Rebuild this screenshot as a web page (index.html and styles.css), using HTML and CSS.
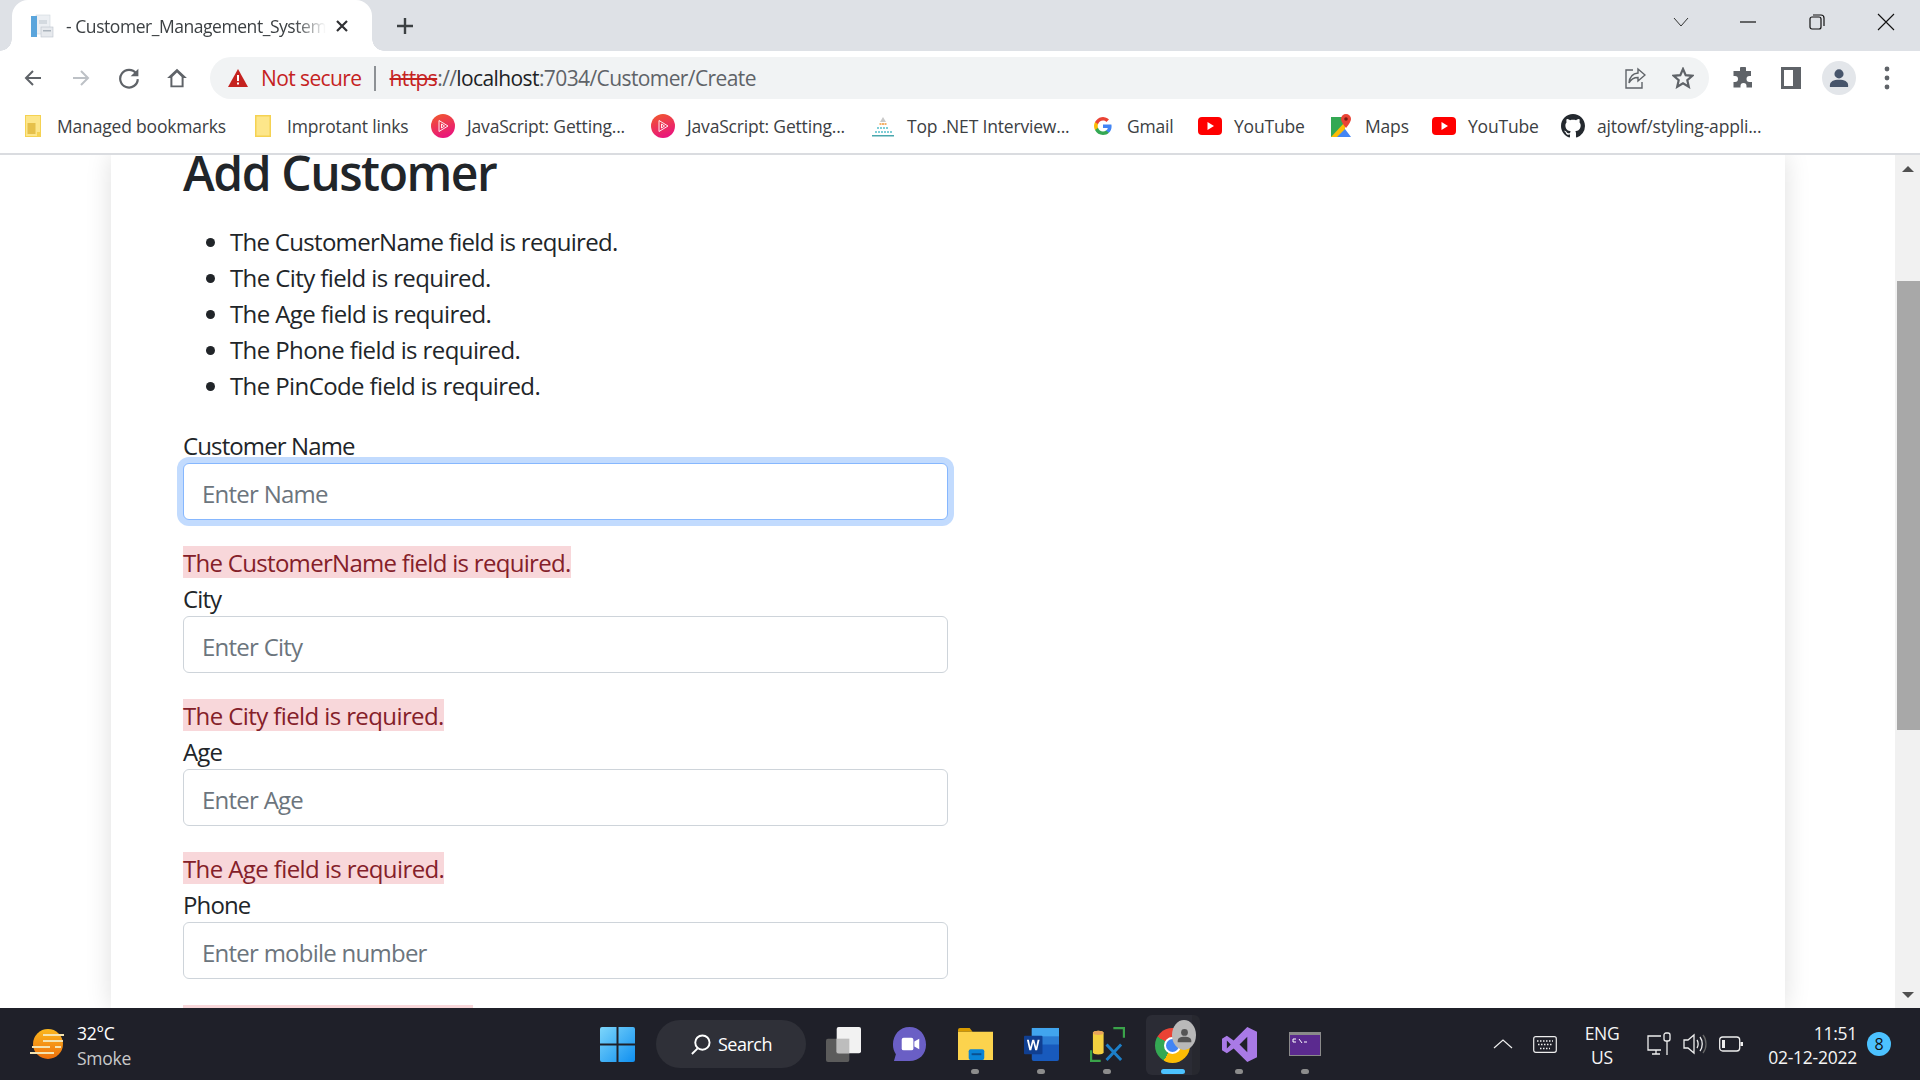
FILE: index.html
```html
<!DOCTYPE html>
<html lang="en">
<head>
<meta charset="utf-8">
<title>Customer_Management_System</title>
<link rel="stylesheet" href="styles.css">
</head>
<body>
<div class="screen">
  <header class="tabstrip">
    <div class="tab">
      <svg class="favicon" viewBox="0 0 24 24"><rect x="6" y="1" width="14" height="19" fill="#eceff3" stroke="#cfd6dd" stroke-width=".6"/><rect x="1" y="2" width="6" height="21" fill="#5aa5dc"/><rect x="9" y="6" width="8" height="4" fill="#d4dae0"/><rect x="11" y="13" width="12" height="10" fill="#e6e9ed" stroke="#bcc4cc" stroke-width=".6"/><rect x="13" y="16" width="8" height="1.5" fill="#aab3bc"/></svg>
      <span class="tab-title">- Customer_Management_System</span>
      <svg class="tab-close" viewBox="0 0 14 14"><path d="M2 2l10 10M12 2L2 12" stroke="#303134" stroke-width="2.2" fill="none"/></svg>
    </div>
    <svg class="new-tab" viewBox="0 0 18 18"><path d="M9 1v16M1 9h16" stroke="#3c4043" stroke-width="2.4" fill="none"/></svg>
    <div class="window-controls">
      <svg class="wc" viewBox="0 0 18 18"><path d="M2 5l7 8 7-8" stroke="#333" stroke-width="1" fill="none"/></svg>
      <svg class="wc" viewBox="0 0 18 18"><path d="M1 9h16" stroke="#111" stroke-width="1.2" fill="none"/></svg>
      <svg class="wc" viewBox="0 0 18 18"><rect x="2" y="4" width="11" height="12" rx="2" stroke="#111" stroke-width="1.2" fill="none"/><path d="M5 2h8a3 3 0 0 1 3 3v8" stroke="#111" stroke-width="1.2" fill="none"/></svg>
      <svg class="wc" viewBox="0 0 18 18"><path d="M1 1l16 16M17 1L1 17" stroke="#111" stroke-width="1.1" fill="none"/></svg>
    </div>
  </header>

  <nav class="toolbar">
    <div class="nav-group">
      <div class="slot"><svg class="ic20" viewBox="0 0 20 20"><path d="M18 10H3M10 3l-7 7 7 7" stroke="#5f6368" stroke-width="2" fill="none"/></svg></div>
      <div class="slot"><svg class="ic20" viewBox="0 0 20 20"><path d="M2 10h15M10 3l7 7-7 7" stroke="#bdc1c6" stroke-width="2" fill="none"/></svg></div>
      <div class="slot"><svg class="ic22" viewBox="0 0 20 20"><path d="M16.5 6A8 8 0 1 0 18 11" stroke="#5f6368" stroke-width="2" fill="none"/><path d="M18.5 1.5v7h-7z" fill="#5f6368"/></svg></div>
      <div class="slot"><svg class="ic22" viewBox="0 0 20 20"><path d="M10 1.500L1 10h3v8.500h12V10h3zM5.800 16.800V9l4.200-4 4.200 4v7.800z" fill="#5f6368" fill-rule="evenodd"/></svg></div>
    </div>
    <div class="omnibox">
      <svg class="warn" viewBox="0 0 20 18"><path d="M10 0l10 18H0z" fill="#c5221f"/><rect x="9" y="6" width="2" height="6" fill="#fff"/><rect x="9" y="13.500" width="2" height="2" fill="#fff"/></svg>
      <span class="not-secure">Not secure</span>
      <span class="sep"></span>
      <span class="url"><span class="https">https</span>://<span class="host">localhost</span>:7034/Customer/Create</span>
      <div class="omni-actions">
        <div class="slot"><svg class="ic22" viewBox="0 0 22 22"><path d="M9 3H2v18h16v-6" stroke="#5f6368" stroke-width="1.400" fill="none"/><path d="M14 2l7 6-7 6v-3.500C10 10.500 7 12 5 16c.5-5.500 3.500-9.500 9-10z" stroke="#5f6368" stroke-width="1.400" fill="none"/></svg></div>
        <div class="slot"><svg class="ic22" viewBox="0 0 22 22"><path d="M11 2l2.700 6.200 6.700.6-5.100 4.400 1.500 6.600L11 16.300 5.200 19.800l1.500-6.600L1.600 8.800l6.700-.6z" stroke="#5f6368" stroke-width="2.200" fill="none"/></svg></div>
      </div>
    </div>
    <div class="tool-group">
      <div class="slot"><svg class="ic22" viewBox="0 0 22 22"><path d="M8 1.500a3 3 0 0 1 6 .5v2h5v5h-1.500a3 3 0 0 0 0 6H20v5.500h-5.500V19a3 3 0 0 0-6 0v1.500H1.500V15H3a3 3 0 0 0 0-6H1.500V4H8z" fill="#5f6368"/></svg></div>
      <div class="slot"><svg class="ic22" viewBox="0 0 22 22"><path d="M1 0h20v22H1zM4 3v16h9V3z" fill="#5f6368" fill-rule="evenodd"/></svg></div>
      <div class="slot"><div class="avatar"><svg class="ic22" viewBox="0 0 22 22"><circle cx="11" cy="6.500" r="5" fill="#47556b"/><path d="M1 21v-2c0-4 4-6 10-6s10 2 10 6v2z" fill="#47556b"/></svg></div></div>
      <div class="slot"><svg class="dots" viewBox="0 0 6 24"><circle cx="3" cy="3" r="2.400" fill="#5f6368"/><circle cx="3" cy="12" r="2.400" fill="#5f6368"/><circle cx="3" cy="21" r="2.400" fill="#5f6368"/></svg></div>
    </div>
  </nav>

  <div class="bookmarks">
    <a class="bm b1"><svg class="folder" viewBox="0 0 18 22"><path d="M1 0h16v22H1z" fill="#f5d252"/><path d="M2 1h14v20H2z" fill="#fde68a"/><rect x="3.500" y="8" width="8" height="11" fill="#e6c04a"/><rect x="13" y="17" width="4" height="5" fill="#f5d252"/></svg><span>Managed bookmarks</span></a>
    <a class="bm b2"><svg class="folder" viewBox="0 0 18 22"><path d="M1 0h16v22H1z" fill="#f5d252"/><path d="M2.500 1.500h13v19h-13z" fill="#fde68a"/></svg><span>Improtant links</span></a>
    <a class="bm b3"><span class="ps"><svg class="ps-i" viewBox="0 0 14 14"><path d="M3 1.500L12 7l-9 5.500zM5.500 5v4l3-2z" stroke="#fff" stroke-width=".9" fill="none"/></svg></span><span>JavaScript: Getting...</span></a>
    <a class="bm b4"><span class="ps"><svg class="ps-i" viewBox="0 0 14 14"><path d="M3 1.500L12 7l-9 5.500zM5.500 5v4l3-2z" stroke="#fff" stroke-width=".9" fill="none"/></svg></span><span>JavaScript: Getting...</span></a>
    <a class="bm b5"><svg class="fav" viewBox="0 0 24 24"><path d="M12 3l3 5h-6z" fill="#c9c9c9"/><path d="M8.500 9h2v2h-2zM11 9h2v2h-2zM13.500 9h2v2h-2z" fill="#f4b26b"/><path d="M6 13h2v2H6zM9 13h2v2H9zM12 13h2v2h-2zM15 13h2v2h-2zM4 17h2v2H4zM7 17h2v2H7zM10 17h2v2h-2zM13 17h2v2h-2zM16 17h2v2h-2zM19 17h2v2h-2z" fill="#7fced6"/><path d="M1 21h22v1.500H1z" fill="#4aa7ad"/></svg><span>Top .NET Interview...</span></a>
    <a class="bm b6"><svg class="g" viewBox="0 0 18 18"><path d="M17.600 9.200c0-.6-.1-1.200-.2-1.800H9v3.500h4.800a4.100 4.100 0 0 1-1.800 2.700v2.200h2.900c1.700-1.600 2.700-3.900 2.700-6.600z" fill="#4285f4"/><path d="M9 18c2.400 0 4.500-.8 5.900-2.200L12 13.600c-.8.500-1.800.9-3 .9-2.300 0-4.300-1.600-5-3.700H1v2.300A9 9 0 0 0 9 18z" fill="#34a853"/><path d="M4 10.700a5.400 5.400 0 0 1 0-3.400V5H1a9 9 0 0 0 0 8z" fill="#fbbc05"/><path d="M9 3.600c1.300 0 2.500.5 3.400 1.300L15 2.400A9 9 0 0 0 1 5l3 2.300c.7-2.100 2.700-3.700 5-3.700z" fill="#ea4335"/></svg><span>Gmail</span></a>
    <a class="bm b7"><svg class="yt" viewBox="0 0 24 18"><rect width="24" height="18" rx="4" fill="#f00"/><path d="M9.500 5l6.500 4-6.500 4z" fill="#fff"/></svg><span>YouTube</span></a>
    <a class="bm b8"><svg class="fav" viewBox="0 0 24 24"><path d="M2 3h14v20H2z" fill="#34a853"/><path d="M2 23L16 8v15z" fill="#fbbc05"/><path d="M8 23l8-8 6 8z" fill="#4285f4"/><path d="M17 0a5 5 0 0 1 5 5c0 3-5 9-5 9s-5-6-5-9a5 5 0 0 1 5-5z" fill="#ea4335"/><circle cx="17" cy="5" r="1.800" fill="#7a1a12"/></svg><span>Maps</span></a>
    <a class="bm b9"><svg class="yt" viewBox="0 0 24 18"><rect width="24" height="18" rx="4" fill="#f00"/><path d="M9.500 5l6.500 4-6.500 4z" fill="#fff"/></svg><span>YouTube</span></a>
    <a class="bm b10"><svg class="fav" viewBox="0 0 16 16"><path fill="#24292f" d="M8 0C3.580 0 0 3.580 0 8c0 3.540 2.290 6.530 5.470 7.590.4.070.55-.17.550-.38 0-.19-.010-.82-.010-1.490-2.010.37-2.530-.49-2.690-.94-.090-.23-.48-.94-.82-1.130-.28-.15-.68-.52-.010-.53.630-.010 1.080.58 1.230.82.720 1.210 1.870.870 2.330.660.070-.52.280-.87.510-1.070-1.780-.2-3.640-.89-3.640-3.950 0-.87.310-1.590.820-2.150-.080-.2-.36-1.020.080-2.120 0 0 .67-.21 2.200.820.640-.18 1.320-.27 2-.27s1.360.090 2 .270c1.530-1.040 2.200-.820 2.200-.820.440 1.100.160 1.920.080 2.120.510.560.820 1.270.820 2.150 0 3.070-1.870 3.750-3.650 3.950.290.250.540.730.540 1.480 0 1.070-.010 1.930-.010 2.200 0 .21.150.460.550.380A8.010 8.010 0 0 0 16 8c0-4.420-3.580-8-8-8z"/></svg><span>ajtowf/styling-appli...</span></a>
  </div>

  <div class="viewport">
    <main class="page">
      <section class="card">
        <h2 class="title">Add Customer</h2>
        <ul class="summary">
          <li class="tight">The CustomerName field is required.</li>
          <li>The City field is required.</li>
          <li>The Age field is required.</li>
          <li>The Phone field is required.</li>
          <li>The PinCode field is required.</li>
        </ul>
        <div class="field">
          <label class="lbl">Customer Name</label>
          <input class="ctl focus" type="text" placeholder="Enter Name">
          <div class="err-line"><span class="err tight">The CustomerName field is required.</span></div>
        </div>
        <div class="field">
          <label class="lbl">City</label>
          <input class="ctl" type="text" placeholder="Enter City">
          <div class="err-line"><span class="err">The City field is required.</span></div>
        </div>
        <div class="field">
          <label class="lbl">Age</label>
          <input class="ctl" type="text" placeholder="Enter Age">
          <div class="err-line"><span class="err">The Age field is required.</span></div>
        </div>
        <div class="field">
          <label class="lbl">Phone</label>
          <input class="ctl" type="text" placeholder="Enter mobile number">
          <div class="err-line"><span class="err">The Phone field is required.</span></div>
        </div>
      </section>
    </main>
    <aside class="scrollbar">
      <div class="arrow-up"></div>
      <div class="track"><div class="thumb"></div></div>
      <div class="arrow-down"></div>
    </aside>
  </div>

  <footer class="taskbar">
    <div class="weather">
      <svg class="weather-i" viewBox="0 0 36 30"><defs><linearGradient id="sun" x1="0" y1="0" x2="0" y2="1"><stop offset="0" stop-color="#fbb81f"/><stop offset="1" stop-color="#ee6f0c"/></linearGradient></defs><circle cx="19" cy="15" r="15" fill="url(#sun)"/><path d="M14 6h21M14 12h20M3 18h18M26 18h6M1 24h24" stroke="#f4e3b0" stroke-width="2.200" fill="none"/></svg>
      <div class="weather-t"><div>32°C</div><div class="dim">Smoke</div></div>
    </div>
    <div class="center">
      <svg class="start" viewBox="0 0 35 35"><defs><linearGradient id="win" x1="0" y1="0" x2="1" y2="1"><stop offset="0" stop-color="#7dd6fb"/><stop offset="1" stop-color="#0f8ff0"/></linearGradient></defs><path d="M0 2a2 2 0 0 1 2-2h14.500v16.500H0zM18.500 0H33a2 2 0 0 1 2 2v14.500H18.500zM0 18.500h16.500V35H2a2 2 0 0 1-2-2zM18.500 18.500H35V33a2 2 0 0 1-2 2H18.500z" fill="url(#win)"/></svg>
      <div class="search"><svg class="search-i" viewBox="0 0 22 22"><circle cx="13" cy="9" r="7.500" stroke="#fff" stroke-width="2" fill="none"/><path d="M8 15l-6 6" stroke="#fff" stroke-width="2" fill="none"/></svg><span>Search</span></div>
      <div class="apps">
        <div class="app"><svg class="app-i" viewBox="0 0 36 36"><rect x="0" y="12" width="24" height="24" rx="2" fill="#5b5b5b"/><rect x="11" y="0" width="25" height="27" rx="2" fill="#f2f2f2"/><rect x="11" y="12" width="13" height="15" fill="#bdbdbd"/></svg></div>
        <div class="app"><svg class="app-i" viewBox="0 0 36 36"><path d="M18 0c10 0 17 8 17 18s-7 17-17 17H2l2-7C2 25 1 22 1 18 1 8 8 0 18 0z" fill="#6a5fc5"/><rect x="10" y="11" width="12" height="13" rx="2" fill="#fff"/><path d="M23 15l5-3v11l-5-3z" fill="#fff"/></svg></div>
        <div class="app"><svg class="app-i" viewBox="0 0 36 36"><path d="M0 3a2 2 0 0 1 2-2h10l3 4H0z" fill="#d99b00"/><path d="M0 5h36v29H0z" fill="#fcd34d"/><rect x="11" y="23" width="16" height="11" rx="2" fill="#0a84d6"/><rect x="14" y="27" width="10" height="2" fill="#0a4f8f"/></svg><i class="pip"></i></div>
        <div class="app"><svg class="app-i" viewBox="0 0 36 36"><rect x="8" y="1" width="28" height="34" rx="2" fill="#185abd"/><rect x="8" y="1" width="28" height="9" fill="#41a5ee"/><rect x="8" y="10" width="28" height="8" fill="#2b7cd3"/><rect x="0" y="9" width="19" height="19" rx="1" fill="#103f91"/><path d="M3 13l2.500 11h2L9.500 16l2 8h2L16 13h-2l-1.500 7.500L10.500 13h-2l-2 7.500L5 13z" fill="#fff"/></svg><i class="pip"></i></div>
        <div class="app"><svg class="app-i" viewBox="0 0 36 36"><path d="M3 6c0-3 11-3 11 0v20c0 3-11 3-11 0z" fill="#f4d03f"/><path d="M3 6c0-3 11-3 11 0s-11 3-11 0z" fill="#e9a45b"/><path d="M24 1h11v10M1 24v11h10" stroke="#3aa34a" stroke-width="2.500" fill="none"/><path d="M17 18l15 16M32 18L17 34" stroke="#1c7fc9" stroke-width="3" fill="none"/></svg><i class="pip"></i></div>
        <div class="app active"><div class="stack"></div><div class="chrome"><div class="chrome-in"></div></div><div class="badge-user"><svg class="user-i" viewBox="0 0 22 22"><circle cx="11" cy="6.500" r="5" fill="#555"/><path d="M1 21v-2c0-4 4-6 10-6s10 2 10 6v2z" fill="#555"/></svg></div><i class="pip blue"></i></div>
        <div class="app"><svg class="app-i" viewBox="0 0 36 36"><path d="M26 0l10 5v26l-10 5-14-14-7 5-5-3V12l5-3 7 5zM5 14v8l4-4zM26 10l-8 8 8 8z" fill="#a97ae6" fill-rule="evenodd"/></svg><i class="pip"></i></div>
        <div class="app"><svg class="term" viewBox="0 0 32 24"><rect width="32" height="24" fill="#8a8a8a"/><rect x="1" y="3" width="30" height="20" fill="#5b2a8f"/><path d="M4 7h3M4 10h3M4 7v3M10 7l3 4M15 10h3" stroke="#fff" stroke-width="1" fill="none"/></svg><i class="pip"></i></div>
      </div>
    </div>
    <div class="tray">
      <svg class="chev" viewBox="0 0 20 10"><path d="M1 9l9-8 9 8" stroke="#eee" stroke-width="1.200" fill="none"/></svg>
      <svg class="kbd" viewBox="0 0 24 17"><rect x=".7" y=".7" width="22.600" height="15.600" rx="2" stroke="#eee" stroke-width="1.200" fill="none"/><path d="M4 5h16M5 8.500h14M7 12.500h10" stroke="#eee" stroke-width="1.300" stroke-dasharray="1.500 1.500" fill="none"/></svg>
      <div class="lang"><div>ENG</div><div>US</div></div>
      <svg class="sys" viewBox="0 0 24 24"><path d="M14 4H1v14h13M5 22h8M9 18v4" stroke="#eee" stroke-width="1.300" fill="none"/><rect x="17" y="1" width="6" height="8" rx="2" stroke="#eee" stroke-width="1.300" fill="none"/><path d="M20 9v14" stroke="#eee" stroke-width="1.300"/></svg>
      <svg class="sys" viewBox="0 0 24 24"><path d="M1 8h4l6-5v18l-6-5H1z" stroke="#eee" stroke-width="1.300" fill="none"/><path d="M14 8c1.500 2 1.500 6 0 8M17 5c3 4 3 10 0 14" stroke="#eee" stroke-width="1.300" fill="none"/><path d="M20 3c4 5 4 13 0 18" stroke="#666" stroke-width="1.300" fill="none"/></svg>
      <svg class="sys" viewBox="0 0 24 24"><rect x=".7" y="5" width="20" height="14" rx="3" stroke="#eee" stroke-width="1.300" fill="none"/><rect x="3" y="8" width="3" height="8" fill="#eee"/><rect x="21.500" y="10" width="2.500" height="4" fill="#eee"/></svg>
      <div class="clock"><div>11:51</div><div>02-12-2022</div></div>
      <div class="notif">8</div>
    </div>
  </footer>
</div>
</body>
</html>
```

FILE: styles.css
```css
* { box-sizing: border-box; }
html, body { margin: 0; padding: 0; height: 100%; overflow: hidden; }
body { font-family: "Open Sans", "Noto Sans", sans-serif; color: #212529; background: #fff; }
svg { display: block; flex: none; }
.screen { width: 1920px; height: 1080px; display: flex; flex-direction: column; }

/* tab strip */
.tabstrip { height: 51px; background: #dee1e6; display: flex; align-items: flex-start; flex: none; }
.tab { position: relative; margin-left: 12px; width: 360px; height: 51px; background: #fff; border-radius: 16px 16px 0 0; display: flex; align-items: center; padding-left: 18px; }
.tab::before, .tab::after { content: ""; position: absolute; bottom: 0; width: 12px; height: 12px; }
.tab::before { left: -12px; background: radial-gradient(circle at 0 0, #dee1e6 11.500px, #fff 12px); }
.tab::after { right: -12px; background: radial-gradient(circle at 100% 0, #dee1e6 11.500px, #fff 12px); }
.favicon { width: 24px; height: 24px; }
.tab-title { margin-left: 12px; width: 260px; overflow: hidden; white-space: nowrap; font-size: 17.500px; letter-spacing: -.45px; color: #3c4043;
  -webkit-mask-image: linear-gradient(to right, #000 88%, transparent); mask-image: linear-gradient(to right, #000 88%, transparent); }
.tab-close { width: 14px; height: 14px; margin-left: 9px; }
.new-tab { width: 18px; height: 18px; margin: 17px 0 0 24px; }
.window-controls { margin-left: auto; display: flex; }
.wc { width: 18px; height: 18px; margin: 13px 25px 0 25px; }
.wc:nth-child(1) { margin-right: 24px; }
.wc:nth-child(2) { margin-right: 26px; }
.wc:nth-child(3) { margin-right: 26px; }
.wc:nth-child(4) { margin-right: 25px; }

/* toolbar */
.toolbar { height: 52px; flex: none; background: #fff; display: flex; align-items: flex-start; padding: 6px 9px 0 9px; }
.nav-group, .tool-group, .omni-actions { display: flex; align-items: center; }
.slot { width: 48px; height: 42px; display: flex; align-items: center; justify-content: center; }
.ic20 { width: 20px; height: 20px; }
.ic22 { width: 22px; height: 22px; }
.dots { width: 6px; height: 24px; }
.omnibox { margin-left: 9px; width: 1499px; height: 42px; border-radius: 21px; background: #f1f3f4; display: flex; align-items: center; padding-left: 18px; font-size: 21px; letter-spacing: -.6px; white-space: nowrap; }
.warn { width: 20px; height: 18px; }
.not-secure { margin-left: 13px; color: #c5221f; }
.sep { width: 2px; height: 25px; background: #8d9195; margin: 0 14px 0 12px; }
.url { color: #5f6368; }
.https { color: #c5221f; text-decoration: line-through; }
.host { color: #202124; }
.omni-actions { margin-left: auto; padding-right: 2px; }
.tool-group { margin-left: 10px; }
.avatar { width: 34px; height: 34px; border-radius: 50%; background: #e3e6ea; display: flex; align-items: center; justify-content: center; }
.avatar .ic22 { width: 20px; height: 20px; }

/* bookmarks */
.bookmarks { height: 50px; flex: none; background: #fff; display: flex; align-items: center; padding: 0 0 5px 24px; font-size: 17.500px; letter-spacing: -.18px; color: #3c4043; white-space: nowrap; }
.bm { display: flex; align-items: center; gap: 15px; flex: none; }
.b1 { width: 230px; }
.b2 { width: 177px; }
.b3, .b4 { width: 220px; gap: 12px; }
.b5 { width: 223px; gap: 12px; }
.b6 { width: 104px; }
.b7 { width: 131px; gap: 12px; }
.b8 { width: 103px; gap: 12px; }
.b9 { width: 129px; gap: 12px; }
.b10 { gap: 12px; }
.folder { width: 18px; height: 22px; }
.fav { width: 24px; height: 24px; }
.g { width: 18px; height: 18px; }
.yt { width: 24px; height: 18px; }
.ps { width: 24px; height: 24px; border-radius: 50%; background: linear-gradient(160deg, #f15b2a, #e80a89); display: flex; align-items: center; justify-content: center; }
.ps-i { width: 14px; height: 14px; }

/* page */
.viewport { flex: 1; min-height: 0; display: flex; border-top: 2px solid #dadce0; overflow: hidden; }
.page { flex: 1; min-width: 0; padding-left: 111px; padding-right: 110px; overflow: hidden; }
.card { height: 100%; background: #fff; box-shadow: 0 0 24px rgba(0, 0, 0, .13); padding-left: 72px; overflow: hidden; font-size: 24px; line-height: 36px; letter-spacing: -.6px; }
.title { margin: 0 0 33px; font-size: 48px; line-height: 36px; font-weight: 600; letter-spacing: -1.450px; color: #212529; }
.summary { margin: 0 0 24px; padding: 0 0 0 47px; }
.tight { letter-spacing: -.7px; }
.field { width: 765px; }
.lbl { display: block; height: 35px; letter-spacing: -.88px; }
.ctl { display: block; width: 765px; height: 57px; padding: 3px 18px 0; border: 1.500px solid #ced4da; border-radius: 6px; background: #fff; font: inherit; letter-spacing: -.75px; color: #212529; outline: none; }
.ctl::placeholder { color: #6c757d; opacity: 1; }
.focus { border-color: #86b7fe; box-shadow: 0 0 0 6px #c2dbfe; }
.err-line { margin: 24px 0 1px; height: 36px; display: flex; align-items: center; }
.err { height: 32px; line-height: 34px; background: #f8d7da; color: #842029; }

/* scrollbar */
.scrollbar { width: 25px; flex: none; background: #f1f1f1; display: flex; flex-direction: column; align-items: center; }
.arrow-up { margin-top: 11px; width: 0; height: 0; border: 6px solid transparent; border-top: 0; border-bottom: 6px solid #505050; }
.track { flex: 1; width: 100%; padding-top: 109px; padding-left: 2px; }
.thumb { height: 449px; background: #a8a8a8; }
.arrow-down { margin-bottom: 10px; width: 0; height: 0; border: 6px solid transparent; border-bottom: 0; border-top: 6px solid #505050; }

/* taskbar */
.taskbar { height: 72px; flex: none; background: #1f2029; color: #fff; display: flex; align-items: center; }
.weather { width: 600px; flex: none; padding-left: 29px; display: flex; align-items: center; gap: 12px; }
.weather-i { width: 36px; height: 30px; }
.weather-t { font-size: 17.500px; line-height: 25px; letter-spacing: -.25px; padding-top: 3px; }
.dim { color: #c9c9c9; }
.center { display: flex; align-items: center; height: 72px; }
.start { width: 35px; height: 35px; }
.search { margin-left: 21px; width: 150px; height: 48px; border-radius: 24px; background: #2f3038; display: flex; align-items: center; padding-left: 34px; gap: 7px; font-size: 18px; letter-spacing: -.5px; }
.search-i { width: 21px; height: 21px; }
.apps { display: flex; margin-left: 4px; height: 72px; }
.app { position: relative; width: 66px; height: 72px; display: flex; align-items: center; justify-content: center; }
.app-i { width: 35px; height: 35px; }
.term { width: 32px; height: 24px; }
.pip { position: absolute; left: 29px; bottom: 6px; width: 8px; height: 5px; border-radius: 3px; background: #8c8c8c; }
.active::before { content: ""; position: absolute; left: 6px; top: 7px; width: 52px; height: 60px; border-radius: 6px; background: #2b2c35; }
.stack { position: absolute; left: 52px; top: 7px; width: 8px; height: 60px; border-radius: 0 6px 6px 0; background: #27282f; }
.chrome { position: relative; width: 35px; height: 35px; border-radius: 50%; background: conic-gradient(#ea4335 0 90deg, #fbbc05 90deg 210deg, #34a853 210deg 300deg, #ea4335 300deg); display: flex; align-items: center; justify-content: center; margin-top: 2px; margin-right: 1px; }
.chrome-in { width: 17px; height: 17px; border-radius: 50%; background: #4285f4; border: 2.500px solid #fff; }
.badge-user { position: absolute; left: 32px; top: 12px; width: 24px; height: 30px; border-radius: 50%; background: #b9b9b9; display: flex; align-items: center; justify-content: center; }
.user-i { width: 15px; height: 15px; }
.pip.blue { left: 21px; width: 24px; background: #4cc2ff; }
.tray { display: flex; align-items: center; height: 72px; margin-left: auto; color: #f5f5f5; }
.chev { width: 20px; height: 10px; margin-right: 20px; }
.kbd { width: 24px; height: 17px; }
.lang { width: 50px; margin: 1px 20px 0; text-align: center; font-size: 17.500px; line-height: 24px; letter-spacing: -.3px; }
.sys { width: 24px; height: 24px; margin-right: 12px; }
.clock { width: 92px; margin: 1px 0 0 10px; text-align: right; font-size: 17.500px; line-height: 24px; letter-spacing: -.25px; white-space: nowrap; }
.notif { margin: 0 29px 0 10px; width: 24px; height: 24px; border-radius: 50%; background: #4cc2ff; color: #111; font-size: 16px; line-height: 24px; text-align: center; }
```
